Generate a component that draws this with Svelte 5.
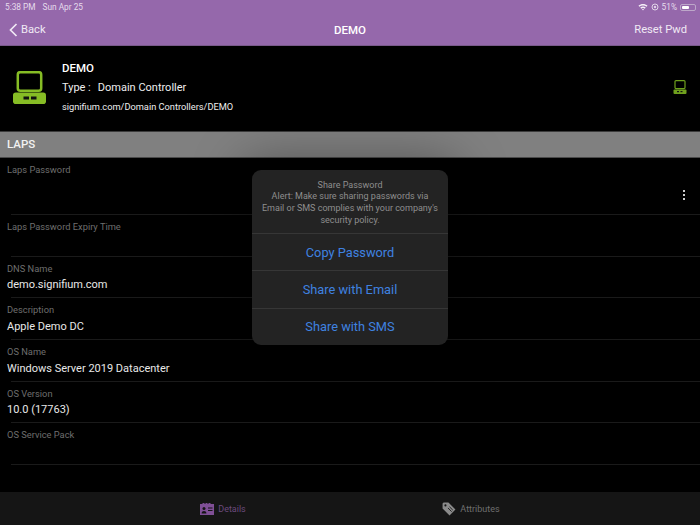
<script>
  const rows = [
    { label: 'Laps Password', value: '', tall: true, more: true },
    { label: 'Laps Password Expiry Time', value: '' },
    { label: 'DNS Name', value: 'demo.signifium.com' },
    { label: 'Description', value: 'Apple Demo DC' },
    { label: 'OS Name', value: 'Windows Server 2019 Datacenter' },
    { label: 'OS Version', value: '10.0 (17763)' },
    { label: 'OS Service Pack', value: '' }
  ];
</script>

<div class="page">
  <header class="top">
    <div class="status">
      <span><span class="time">5:38 PM</span>Sun Apr 25</span>
      <span class="status-right">
        <svg width="10" height="8" viewBox="0 0 11 8"><path d="M0.5 2.6C3.4 0 7.6 0 10.5 2.6L9.4 3.8C7.1 1.8 3.9 1.8 1.6 3.8Z M2.5 4.6C4.2 3.1 6.8 3.1 8.5 4.6L7.4 5.8C6.3 4.9 4.7 4.9 3.6 5.8Z M4.4 6.6C5 6 6 6 6.6 6.6L5.5 7.8Z" fill="#f4eef7"/></svg>
        <svg class="lock" width="8" height="8" viewBox="0 0 8 8"><circle cx="4" cy="4" r="3" fill="none" stroke="#e0d3e7" stroke-width="1"/><circle cx="4" cy="4" r="1.2" fill="#e0d3e7"/></svg>
        <span>51%</span>
        <span class="battery"><span class="battery-fill"></span></span>
      </span>
    </div>
    <nav class="nav">
      <span class="back">
        <svg width="9" height="14" viewBox="0 0 9 14"><path d="M7.5 1L1.5 7l6 6" fill="none" stroke="#f0e8f4" stroke-width="1.7"/></svg>
        Back
      </span>
      <span class="title">DEMO</span>
      <span class="reset">Reset Pwd</span>
    </nav>
  </header>

  <section class="info">
    <svg class="pc" width="33" height="33" viewBox="0 0 33 33">
      <rect x="4.8" y="1.2" width="23.4" height="18.6" rx="2.5" fill="none" stroke="#86bc25" stroke-width="2.5"/>
      <rect x="0" y="21.5" width="33" height="11.5" rx="2.8" fill="#86bc25"/>
      <rect x="10.5" y="25.5" width="5.5" height="3" fill="#111"/>
      <rect x="18" y="25.5" width="5.5" height="3" fill="#111"/>
    </svg>
    <div class="info-text">
      <div class="name">DEMO</div>
      <div class="type"><span class="type-key">Type :</span>Domain Controller</div>
      <div class="path">signifium.com/Domain Controllers/DEMO</div>
    </div>
    <svg class="pc-small" width="14" height="14" viewBox="0 0 14 14">
      <rect x="2" y="0.6" width="10" height="8" rx="1" fill="none" stroke="#6fa01d" stroke-width="1.2"/>
      <rect x="0.5" y="9.5" width="13" height="4.5" rx="1" fill="#6fa01d"/>
      <rect x="4" y="11" width="2" height="1.2" fill="#111"/>
      <rect x="7.5" y="11" width="2" height="1.2" fill="#111"/>
    </svg>
  </section>

  <div class="section-bar">LAPS</div>

  <main class="rows">
    {#each rows as row}
      <div class="row" class:tall={row.tall}>
        <div class="label">{row.label}</div>
        {#if row.value}<div class="value">{row.value}</div>{/if}
        {#if row.more}<span class="more"><i></i><i></i><i></i></span>{/if}
      </div>
    {/each}
  </main>

  <footer class="tabs">
    <div class="tab active">
      <svg width="14" height="12" viewBox="0 0 14 12">
        <path d="M0 1h2.5V0h2v1h1V0h2v1h1V0h2v1H14v11H0Z" fill="#7f4f96"/>
        <circle cx="4" cy="5.5" r="1.5" fill="#151515"/>
        <path d="M1.6 10.5c0-3.2 4.8-3.2 4.8 0Z" fill="#151515"/>
        <rect x="8" y="4.5" width="4.5" height="1" fill="#151515"/>
        <rect x="8" y="7" width="4.5" height="1" fill="#151515"/>
      </svg>
      <span>Details</span>
    </div>
    <div class="tab">
      <svg width="14" height="14" viewBox="0 0 13 13">
        <path d="M0.5 1.5L1.5 0.5L6 0.5L12.5 7L7 12.5L0.5 6Z" fill="#8a8a8a"/>
        <circle cx="3.2" cy="3.2" r="1" fill="#151515"/>
        <path d="M5.5 5.5L9 9M7 4.5L10 7.5" stroke="#151515" stroke-width="0.8"/>
      </svg>
      <span>Attributes</span>
    </div>
  </footer>

  <div class="alert">
    <div class="alert-msg">
      <div>Share Password</div>
      <div>Alert: Make sure sharing passwords via Email or SMS complies with your company's security policy.</div>
    </div>
    <div class="action">Copy Password</div>
    <div class="action">Share with Email</div>
    <div class="action">Share with SMS</div>
  </div>
</div>

<style>
  :global(body) {
    margin: 0;
    background: #000;
  }
  .page {
    position: relative;
    width: 700px;
    height: 525px;
    overflow: hidden;
    display: flex;
    flex-direction: column;
    background: #000;
    font-family: Roboto, "Liberation Sans", sans-serif;
    color: #eee;
  }
  .top {
    height: 45px;
    background: #9568ab;
    border-bottom: 1px solid #7a5a8b;
    color: #f0e8f4;
    flex: none;
  }
  .status {
    height: 14px;
    padding: 0 4px 0 5px;
    display: flex;
    justify-content: space-between;
    align-items: center;
    font-size: 8.3px;
    color: #e6dcec;
  }
  .time {
    margin-right: 7px;
  }
  .status-right {
    display: flex;
    align-items: center;
    gap: 3px;
  }
  .battery {
    width: 16px;
    height: 7px;
    border: 1px solid #bda7c9;
    border-radius: 2px;
    padding: 1px;
    box-sizing: border-box;
    display: flex;
  }
  .battery-fill {
    width: 7px;
    background: #fff;
    border-radius: 1px;
  }
  .nav {
    height: 31px;
    display: grid;
    grid-template-columns: 1fr auto 1fr;
    align-items: center;
    padding: 0 13px 0 9px;
    font-size: 11.2px;
  }
  .back {
    display: flex;
    align-items: center;
    gap: 3px;
  }
  .title {
    font-weight: 500;
    color: #fff;
    font-size: 11.5px;
    margin-left: 4px;
  }
  .reset {
    justify-self: end;
  }
  .info {
    height: 85px;
    flex: none;
    display: flex;
    align-items: center;
    padding: 0 13px;
    box-sizing: border-box;
  }
  .pc {
    flex: none;
    margin-right: 16px;
    margin-top: -2px;
  }
  .pc-small {
    margin-top: -4px;
  }
  .info-text {
    flex: 1;
    display: flex;
    flex-direction: column;
    padding-bottom: 2px;
    color: #eee;
  }
  .name {
    font-size: 11.5px;
    font-weight: 500;
    color: #fff;
    line-height: 14px;
  }
  .type {
    font-size: 11px;
    line-height: 20px;
    margin-top: 3px;
  }
  .type-key {
    margin-right: 7px;
  }
  .path {
    font-size: 9.25px;
    line-height: 14px;
    margin-top: 1.5px;
  }
  .section-bar {
    height: 27px;
    flex: none;
    background: #808080;
    border-top: 1px solid #3c3c3c;
    border-bottom: 1px solid #4a4a4a;
    box-sizing: border-box;
    padding: 0 0 1px 7px;
    display: flex;
    align-items: center;
    font-size: 11.5px;
    font-weight: 500;
    color: #f2f2f2;
  }
  .rows {
    flex: 1;
    min-height: 0;
  }
  .row {
    position: relative;
    height: 41.7px;
    padding: 6px 0 0 7px;
    box-sizing: border-box;
  }
  .row.tall {
    height: 57px;
  }
  .row::after {
    content: "";
    position: absolute;
    left: 11px;
    right: 0;
    bottom: 0;
    height: 1px;
    background: #1a1a1a;
  }
  .label {
    font-size: 9.3px;
    line-height: 12px;
    color: #6e6e6e;
  }
  .value {
    font-size: 11px;
    line-height: 15px;
    margin-top: 2.5px;
    color: #e8e8e8;
  }
  .more {
    position: absolute;
    right: 15px;
    top: 32px;
    display: flex;
    flex-direction: column;
    gap: 2px;
  }
  .more i {
    width: 2px;
    height: 2px;
    background: #ccc;
    display: block;
  }
  .tabs {
    height: 33px;
    flex: none;
    background: #151515;
    display: grid;
    grid-template-columns: 248px 248px;
    padding-left: 99px;
    box-sizing: border-box;
  }
  .tab {
    display: flex;
    align-items: center;
    justify-content: center;
    gap: 4px;
    font-size: 9px;
    color: #6f6f6f;
  }
  .tab.active {
    color: #6b4a7d;
  }
  .alert {
    position: absolute;
    left: 252px;
    top: 170px;
    width: 196px;
    height: 175px;
    border-radius: 9px;
    background: #232323;
    box-shadow: 0 0 50px 10px rgba(0, 0, 0, 0.35);
    display: flex;
    flex-direction: column;
  }
  .alert-msg {
    height: 63px;
    box-sizing: border-box;
    padding: 9.5px 9px 0;
    font-size: 9px;
    line-height: 11.7px;
    text-align: center;
    color: #8e8e8e;
  }
  .action {
    flex: 1;
    border-top: 1px solid #363636;
    display: flex;
    align-items: center;
    justify-content: center;
    font-size: 12.8px;
    color: #3f82e0;
  }
</style>
